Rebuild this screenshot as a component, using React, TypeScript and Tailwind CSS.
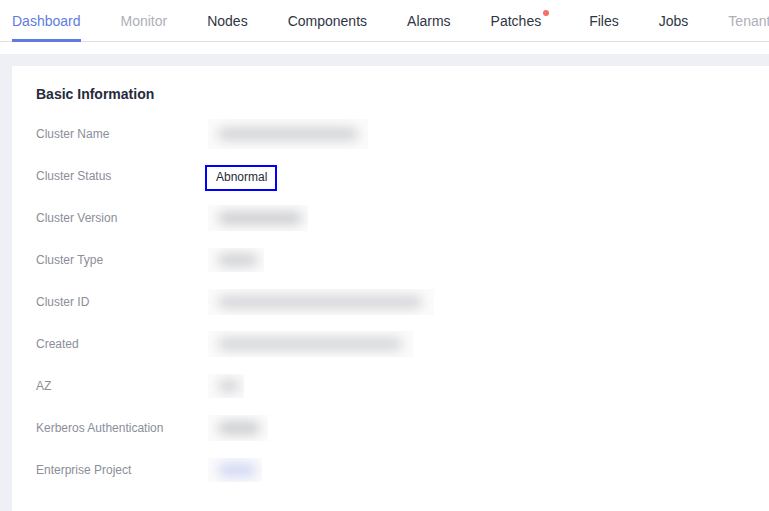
import React from "react";

const tabs = [
  { name: "Dashboard", state: "active" },
  { name: "Monitor", state: "disabled" },
  { name: "Nodes", state: "normal" },
  { name: "Components", state: "normal" },
  { name: "Alarms", state: "normal" },
  { name: "Patches", state: "dot" },
  { name: "Files", state: "normal" },
  { name: "Jobs", state: "normal" },
  { name: "Tenant", state: "disabled" },
];

// blurred placeholder values: clip box width/height, blob width, tint
const rows = [
  { label: "Cluster Name", w: 160, h: 30, blob: 140, tint: "bg-[#cfd0d4]" },
  { label: "Cluster Status", status: true },
  { label: "Cluster Version", w: 100, h: 26, blob: 84, tint: "bg-[#c9cace]" },
  { label: "Cluster Type", w: 56, h: 24, blob: 40, tint: "bg-[#cdced2]" },
  { label: "Cluster ID", w: 226, h: 26, blob: 204, tint: "bg-[#d2d3d7]" },
  { label: "Created", w: 205, h: 26, blob: 184, tint: "bg-[#d2d3d7]" },
  { label: "AZ", w: 36, h: 24, blob: 22, tint: "bg-[#d2d3d7]" },
  { label: "Kerberos Authentication", w: 60, h: 26, blob: 42, tint: "bg-[#c8c9cd]" },
  { label: "Enterprise Project", w: 54, h: 24, blob: 38, tint: "bg-[#ccd4f3]" },
];

function Blurred({ w, h, blob, tint }: { w: number; h: number; blob: number; tint: string }) {
  return (
    <div className="relative overflow-hidden bg-[#fbfbfb]" style={{ width: w, height: h }}>
      <div
        className={`absolute top-1/2 -translate-y-1/2 left-[10px] h-[12px] rounded-full blur-[6px] ${tint}`}
        style={{ width: blob }}
      />
    </div>
  );
}

export default function App() {
  return (
    <div className="w-[769px] h-[511px] overflow-hidden bg-white" style={{ fontFamily: '"Liberation Sans", Arial, sans-serif' }}>
      <div className="flex h-[42px] border-b border-[#dfe1e6] pl-[12px] gap-[40px] whitespace-nowrap">
        {tabs.map(t => (
          <div
            key={t.name}
            className={`flex items-start pt-[12px] text-[14px] leading-[18px] ${
              t.state === "active"
                ? "text-[#5e7ce0] border-b-[3px] border-[#5e7ce0] -mb-[1px]"
                : t.state === "disabled"
                ? "text-[#adb0b8]"
                : "text-[#303544]"
            }`}
          >
            {t.name}
            {t.state === "dot" && (
              <span className="ml-[2px] -mt-[2px] w-[6px] h-[6px] rounded-full bg-[#f66f6a]" />
            )}
          </div>
        ))}
      </div>
      <div className="h-[12px] bg-white" />
      <div className="bg-[#eff0f5] pl-[12px] pt-[12px] h-[457px]">
        <div className="bg-white h-full pl-[24px] pt-[19px]">
          <div className="text-[14px] font-bold text-[#252b3a] leading-[18px] mb-[10px]">Basic Information</div>
          {rows.map(r => (
            <div key={r.label} className="flex items-center h-[42px]">
              <div className="w-[172px] text-[12px] text-[#8a8e99]">{r.label}</div>
              {r.status ? (
                <div className="-ml-[3px] mt-[3px] w-[72px] h-[26px] border-2 border-[#0000ff] pl-[9px] text-[12px] leading-[20px] text-[#252b3a]">
                  Abnormal
                </div>
              ) : (
                <Blurred w={r.w!} h={r.h!} blob={r.blob!} tint={r.tint!} />
              )}
            </div>
          ))}
        </div>
      </div>
    </div>
  );
}
